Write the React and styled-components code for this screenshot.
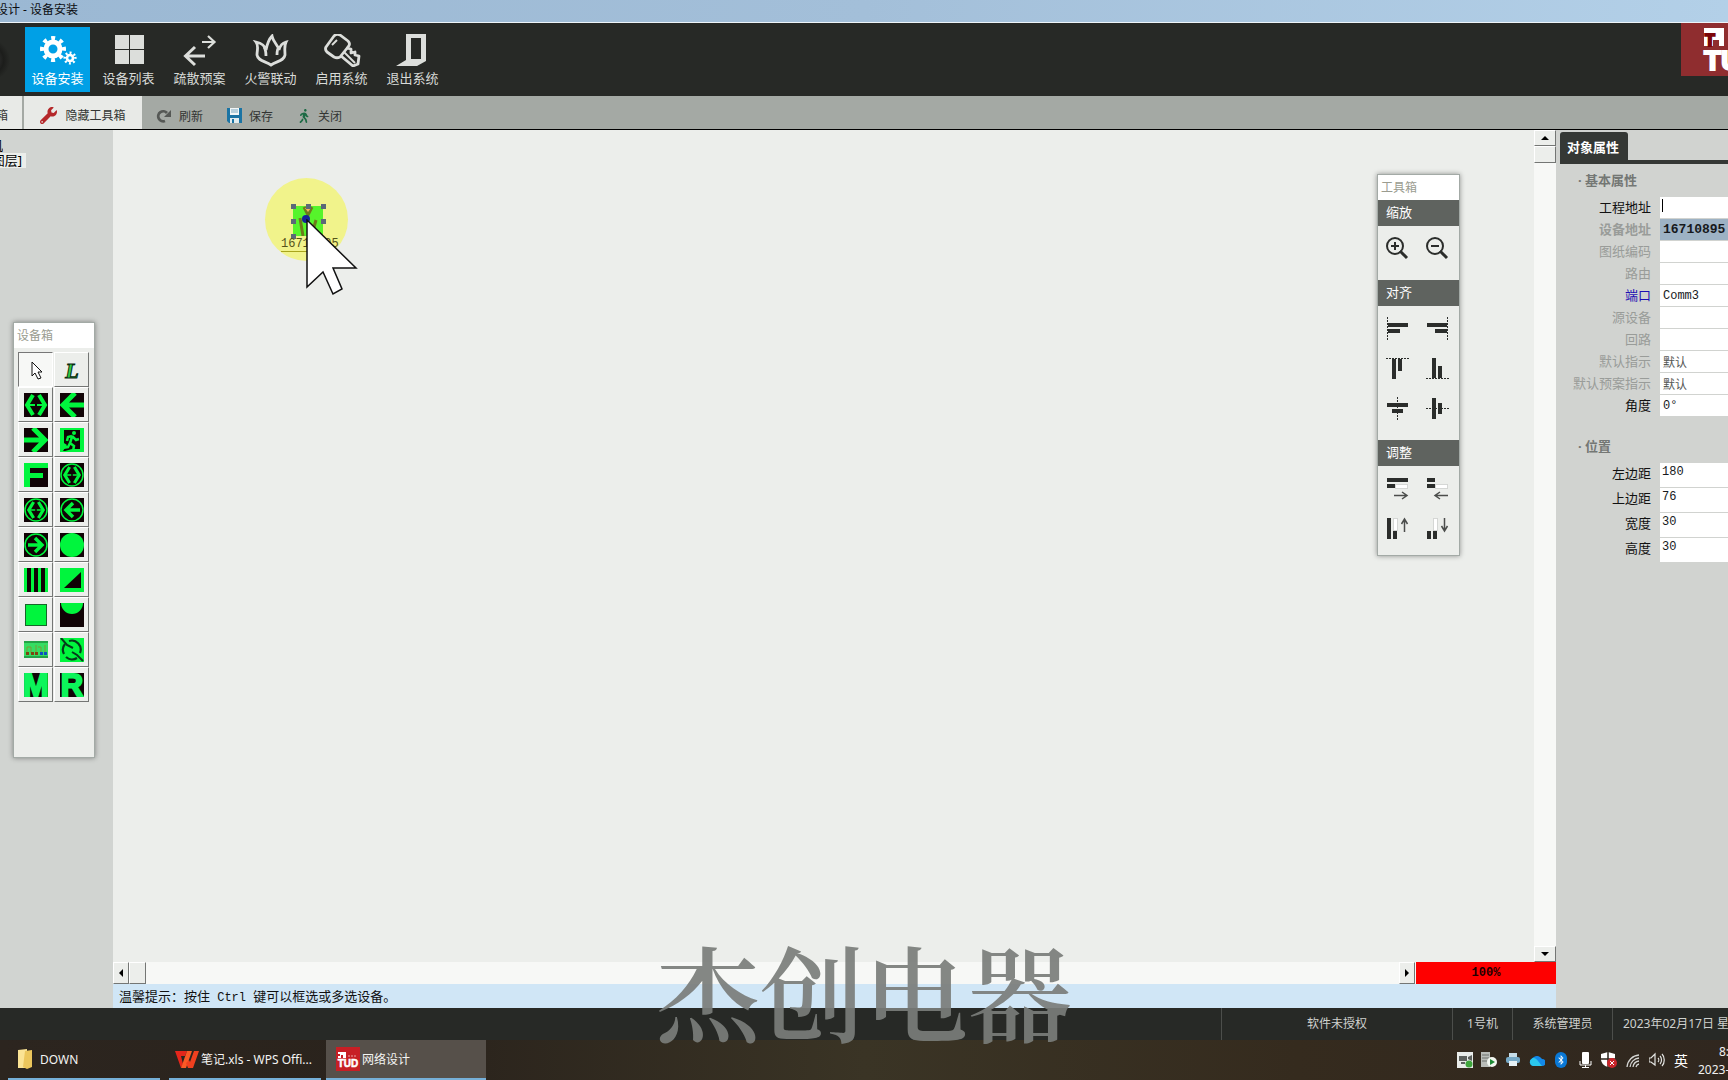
import React from "react"
import styled, { createGlobalStyle } from "styled-components"
import { FaWrench, FaWalking, FaBluetoothB } from "react-icons/fa"

const GlobalStyle = createGlobalStyle`
  * {
    box-sizing: border-box;
  }
  body {
    margin: 0;
    overflow: hidden;
    font-family: "Noto Sans", "Noto Sans CJK SC", sans-serif;
    font-size: 13px;
  }
  button {
    font-family: inherit;
    border: none;
    padding: 0;
    background: none;
    cursor: pointer;
  }
  svg {
    display: block;
    flex-shrink: 0;
  }
`

const GREEN = "#00f53d"
const DARK = "#100305"

/* ---------- icons ---------- */

const Gear = ({ cx, cy, r, w, teeth }) => {
  const ring = r + w / 2
  const dash = (2 * Math.PI * ring) / (teeth * 2)
  return (
    <g fill="none" stroke="#fff">
      <circle cx={cx} cy={cy} r={r - 1} strokeWidth={w} />
      <circle
        cx={cx}
        cy={cy}
        r={ring}
        strokeWidth={w}
        strokeDasharray={`${dash * 0.9} ${dash * 1.1}`}
        transform={`rotate(-11 ${cx} ${cy})`}
      />
    </g>
  )
}

const ribbonIcons = {
  install: (
    <>
      <Gear cx={15} cy={15} r={8} w={5} teeth={8} />
      <Gear cx={32} cy={24} r={4} w={2.6} teeth={8} />
    </>
  ),
  list: (
    <g fill="#dcdedb">
      <rect x="6" y="1" width="14" height="14" />
      <rect x="21" y="1" width="14" height="14" />
      <rect x="6" y="16" width="14" height="14" />
      <rect x="21" y="16" width="14" height="14" />
    </g>
  ),
  plan: (
    <g fill="none" stroke="#dcdedb">
      <path d="M22 8h12M28 2l6.500 6-6.500 6" strokeWidth="2.200" />
      <path d="M6 22h19M15 13L5.500 22l9.500 9" strokeWidth="3" />
    </g>
  ),
  fire: (
    <path
      d="M5 8c3 4 1 8 1 13 1 6 8 6 14 10 6-4 13-4 14-10 0-5-1-9 1-13-4 1-6 4-7 8-1-5-6-8-7-14-4 4-5 9-6 14C14 12 10 9 5 8zM13 13c2 3 2 5 2 9M28 13c-2 2-2 5-2 8"
      fill="none"
      stroke="#dcdedb"
      strokeWidth="2.800"
    />
  ),
  key: (
    <g fill="none" stroke="#dcdedb" strokeWidth="2.800" strokeLinejoin="round">
      <path d="M4 13L12 2c2-2 4-2 6-1l8 6c2 2 2 4 0 6l-8 10c-2 1-4 1-6 0l-7-5c-2-2-2-3-1-5z" />
      <path d="M10 11l5-5" strokeWidth="2" />
      <path d="M19 22l12 10 5-2 1-8-4-1v-3l-4 1v-4l-5-1" />
      <path d="M22 18l11 11" strokeWidth="2" />
    </g>
  ),
  exit: (
    <path
      fillRule="evenodd"
      fill="#dcdedb"
      d="M13 0h20v27l-9 5H3l10-6zM18 4v21h10V4z"
    />
  ),
}

const RefreshIcon = () => (
  <svg width="16" height="14" viewBox="0 0 16 14">
    <path d="M9 12a5 5 0 1 1 2-8" fill="none" stroke="#555855" strokeWidth="2.800" />
    <path d="M15 1v7H8z" fill="#555855" />
  </svg>
)

const SaveIcon = () => (
  <svg width="15" height="15" viewBox="0 0 15 15">
    <path d="M0 0h15v15H2l-2-2z" fill="#1b74a4" />
    <path d="M3 0h9v7H3z" fill="#f2f6f7" />
    <path d="M4 2h7M4 4h7" stroke="#7da9bf" />
    <path d="M3 10h9v5H3z" fill="#e2ecef" />
    <path d="M5 11h2v4H5z" fill="#1b74a4" />
  </svg>
)

const DoubleArrow = ({ s = 1 }) => (
  <g
    transform={`translate(12 12) scale(${s})`}
    fill="none"
    stroke={GREEN}
    strokeWidth="4"
  >
    <path d="M-3-10l-6 10 6 10M3-10l6 10-6 10" />
    <path d="M-7 0h6M1 0h6" strokeWidth="2" />
  </g>
)

const Disc = () => (
  <circle cx="12" cy="12" r="11" fill="none" stroke={GREEN} strokeWidth="1.500" />
)

const deviceIcons = [
  {
    name: "选择",
    bare: true,
    art: (
      <path
        d="M8 4v14l3-3 3 6 3-1-3-6h4z"
        fill="#fff"
        stroke="#111"
        strokeLinejoin="round"
      />
    ),
  },
  {
    name: "线路",
    bare: true,
    art: (
      <text
        x="12"
        y="20"
        textAnchor="middle"
        fontFamily="Liberation Serif, serif"
        fontStyle="italic"
        fontWeight="bold"
        fontSize="22"
        fill="#2fd046"
        stroke="#0b2a10"
        strokeWidth="1"
      >
        L
      </text>
    ),
  },
  { name: "双向", art: <DoubleArrow /> },
  {
    name: "左向",
    art: (
      <path d="M24 12H4M15 0L3 12l12 12" fill="none" stroke={GREEN} strokeWidth="5" />
    ),
  },
  {
    name: "右向",
    art: (
      <path d="M0 12h20M9 0l12 12L9 24" fill="none" stroke={GREEN} strokeWidth="5" />
    ),
  },
  {
    name: "安全出口",
    art: (
      <>
        <path d="M0 0h24v24H0z" fill={GREEN} />
        <path d="M4 2h16v19h-8l-7 2H3l4-6-3-2z" fill={DARK} />
        <circle cx="14" cy="5" r="2" fill={GREEN} />
        <path
          d="M12 8l-4 1-1 4M12 8l4 4 3-1M12 9l-2 6 4 3-1 5M10 15l-2 4-6 1"
          fill="none"
          stroke={GREEN}
          strokeWidth="2.500"
        />
      </>
    ),
  },
  {
    name: "楼层",
    art: (
      <g fill={GREEN}>
        <rect width="24" height="5" />
        <rect width="6" height="24" />
        <rect x="6" y="10" width="13" height="5" />
      </g>
    ),
  },
  {
    name: "双向地埋",
    art: (
      <>
        <Disc />
        <DoubleArrow s={0.8} />
      </>
    ),
  },
  {
    name: "双向吊装",
    art: (
      <>
        <Disc />
        <DoubleArrow s={0.8} />
      </>
    ),
  },
  {
    name: "左向地埋",
    art: (
      <>
        <Disc />
        <path
          d="M20 12H6M13 5l-7 7 7 7"
          fill="none"
          stroke={GREEN}
          strokeWidth="3.500"
        />
      </>
    ),
  },
  {
    name: "右向地埋",
    art: (
      <>
        <Disc />
        <path
          d="M4 12h14M11 5l7 7-7 7"
          fill="none"
          stroke={GREEN}
          strokeWidth="3.500"
        />
      </>
    ),
  },
  { name: "圆灯", art: <circle cx="12" cy="12" r="12" fill={GREEN} /> },
  {
    name: "灯带",
    art: (
      <g fill={GREEN}>
        <rect width="3" height="24" />
        <rect x="7" width="3" height="24" />
        <rect x="14" width="3" height="24" />
        <rect x="21" width="3" height="24" />
      </g>
    ),
  },
  {
    name: "坡道",
    art: (
      <>
        <path d="M0 0h24v24H0z" fill={GREEN} />
        <path d="M21 4v16H4z" fill={DARK} />
      </>
    ),
  },
  {
    name: "方灯",
    bare: true,
    art: (
      <rect x="1.500" y="1.500" width="21" height="21" fill={GREEN} stroke="#17662a" />
    ),
  },
  { name: "半圆灯", art: <path d="M1 0a11 11 0 0 0 22 0z" fill={GREEN} /> },
  {
    name: "配电箱",
    bare: true,
    art: (
      <>
        <path d="M0 3h24v17H0z" fill="#35dd62" />
        <path d="M0 4h24M0 19h24" stroke="#15692d" />
        <path
          d="M3 15V9h4v6M12 15V7M17 15V9h-3M21 15V7"
          stroke="#7d9a35"
          fill="none"
        />
        <g fill="#7c4410">
          <rect x="2" y="14" width="3" height="3" />
          <rect x="7" y="14" width="3" height="3" />
          <rect x="11" y="14" width="3" height="3" />
        </g>
        <path d="M16 14h3v3h-3zM20 14h3v3h-3z" fill="#0d4fc4" />
      </>
    ),
  },
  {
    name: "断路",
    bare: true,
    art: (
      <>
        <path d="M0 0h24v24H0z" fill={GREEN} />
        <path
          d="M4 16A9 9 0 0 1 5 6M9 3A9 9 0 0 1 20 15M17 20A9 9 0 0 1 6 19"
          fill="none"
          stroke="#06391a"
          strokeWidth="2.200"
        />
        <path
          d="M1 0l6 7 6 3M12 14l5 3 6 6"
          fill="none"
          stroke="#06391a"
          strokeWidth="2"
        />
      </>
    ),
  },
  { name: "M型", letter: "M" },
  { name: "R型", letter: "R" },
]

const Letter = ({ children }) => (
  <text
    x="12"
    y="23"
    textAnchor="middle"
    fontFamily="Liberation Sans, sans-serif"
    fontWeight="bold"
    fontSize="31"
    fill="#0cf55a"
    stroke="#0cf55a"
    strokeWidth="2"
  >
    {children}
  </text>
)

const K = "#2b2d2b"
const Lens = ({ plus }) => (
  <g fill="none" stroke={K} strokeWidth="2">
    <circle cx="10" cy="10" r="8" />
    <path d="M6 10h8" />
    {plus && <path d="M10 6v8" />}
    <path d="M15 15l7 7" strokeWidth="3" />
  </g>
)
const Dash = ({ d }) => (
  <path d={d} stroke={K} strokeDasharray="2 1" fill="none" />
)
const Bars = ({ d }) => <path d={d} fill={K} />
const Ghost = (props) => (
  <rect {...props} fill="#fff" stroke="#b5b7b5" strokeDasharray="1 1" />
)
const Thin = ({ d }) => (
  <path d={d} stroke="#4b4d4b" strokeWidth="1.500" fill="none" />
)

const toolGroups = [
  {
    title: "缩放",
    tools: [
      ["放大", <Lens plus />],
      ["缩小", <Lens />],
    ],
  },
  {
    title: "对齐",
    tools: [
      [
        "左对齐",
        <>
          <Dash d="M2.500 1v23" />
          <Bars d="M3 7h20v4H3zM3 13h12v4H3z" />
        </>,
      ],
      [
        "右对齐",
        <>
          <Dash d="M22.500 1v23" />
          <Bars d="M2 7h20v4H2zM10 13h12v4H10z" />
        </>,
      ],
      [
        "顶对齐",
        <>
          <Dash d="M1 2.500h23" />
          <Bars d="M7 3h4v20H7zM13 3h4v12h-4z" />
        </>,
      ],
      [
        "底对齐",
        <>
          <Dash d="M1 22.500h23" />
          <Bars d="M7 2h4v20H7zM13 10h4v12h-4z" />
        </>,
      ],
      [
        "水平居中",
        <>
          <Dash d="M12.500 1v23" />
          <Bars d="M2 7h21v4H2zM7 13h11v4H7z" />
        </>,
      ],
      [
        "垂直居中",
        <>
          <Dash d="M1 12.500h23" />
          <Bars d="M7 2h4v21H7zM13 7h4v11h-4z" />
        </>,
      ],
    ],
  },
  {
    title: "调整",
    tools: [
      [
        "等宽",
        <>
          <Bars d="M2 2h21v4H2zM2 8h8v4H2z" />
          <Ghost x="10.500" y="8.500" width="12" height="4" />
          <Thin d="M9 19.500h13M17 16l5 3.500-5 3.500" />
        </>,
      ],
      [
        "缩窄",
        <>
          <Bars d="M2 2h8v4H2zM2 8h8v4H2z" />
          <Ghost x="10.500" y="8.500" width="12" height="4" />
          <Thin d="M23 19.500H10M15 16l-5 3.500 5 3.500" />
        </>,
      ],
      [
        "等高",
        <>
          <Bars d="M2 2h4v21H2zM8 15h4v8H8z" />
          <Ghost x="8.500" y="2.500" width="4" height="12" />
          <Thin d="M19.500 16V3M16.500 8l3-5 3 5" />
        </>,
      ],
      [
        "缩短",
        <>
          <Bars d="M2 15h4v8H2zM8 15h4v8H8z" />
          <Ghost x="8.500" y="2.500" width="4" height="12" />
          <Thin d="M19.500 2v13M16.500 10l3 5 3-5" />
        </>,
      ],
    ],
  },
]

const trayIcons = [
  [
    "远程",
    <>
      <rect width="16" height="16" fill="#e9ecea" />
      <path d="M2 4h8v5H2zM4 10h4v2H4zM11 5l4-2v6l-4-2z" fill="#5c605d" />
      <circle cx="12" cy="12" r="3.500" fill="#3fa63c" />
    </>,
  ],
  [
    "服务",
    <>
      <path d="M0 0h9v15H0z" fill="#b9bcb8" />
      <path d="M1 3h7M1 6h7M1 9h5" stroke="#6d706c" />
      <circle cx="11" cy="10" r="5" fill="#f2f7f1" />
      <path d="M9 7l5 3-5 3z" fill="#1d8a35" />
    </>,
  ],
  [
    "打印机",
    <>
      <path d="M4 1h8v5H4z" fill="#c6dde9" />
      <rect x="1" y="5" width="14" height="6" rx="2" fill="#76a9c7" />
      <path d="M4 9h8v5H4z" fill="#e6f1f6" />
    </>,
  ],
  [
    "云盘",
    <>
      <path
        d="M4 14a4 4 0 0 1-1-7.500A6 6 0 0 1 13 7a3.500 3.500 0 0 1 0 7z"
        fill="#1389ea"
      />
      <path d="M4 14a4 4 0 0 1-1-7.500c4-2 6 3 10 7.500z" fill="#2bc8ee" />
    </>,
  ],
  [
    "蓝牙",
    <>
      <rect x="2" width="12" height="16" rx="6" fill="#0a78d6" />
      <FaBluetoothB x="3" y="3" size={10} color="#fff" />
    </>,
  ],
  [
    "麦克风",
    <>
      <rect x="5" width="7" height="12" rx="1" fill="#fff" />
      <path d="M3 9v4h11V9M8.500 13v3M5 15.500h7" stroke="#fff" fill="none" />
    </>,
  ],
  [
    "安全中心",
    <>
      <path d="M7 0l7 2v5c0 4-3 7-7 8-4-1-7-4-7-8V2z" fill="#fff" />
      <path d="M7 0v15M0 7h14" stroke="#2d261e" strokeWidth="1.500" />
      <circle cx="11" cy="11" r="5" fill="#c9252b" />
      <path d="M9 9l4 4M13 9l-4 4" stroke="#fff" />
    </>,
  ],
  [
    "无线网络",
    <g fill="none" stroke="#d5d6d4" strokeWidth="1.300">
      <path d="M2 15A13 13 0 0 1 14 3M5 15a10 10 0 0 1 9-9M8 15a7 7 0 0 1 6-6M11 15a4 4 0 0 1 3-3" />
    </g>,
  ],
  [
    "音量",
    <g fill="none" stroke="#e4e5e3" strokeWidth="1.200">
      <path d="M0 6h2l4-4v11L2 10H0zM9 6c1 1 1 3 0 4M11 4c2 2 2 6 0 8M13 2c3 3 3 9 0 12" />
    </g>,
  ],
]

/* ---------- data ---------- */

const ribbon = [
  ["install", "设备安装"],
  ["list", "设备列表"],
  ["plan", "疏散预案"],
  ["fire", "火警联动"],
  ["key", "启用系统"],
  ["exit", "退出系统"],
]

const baseProps = [
  { id: "addr", label: "工程地址", value: "", tone: "#111" },
  { id: "device", label: "设备地址", value: "16710895", selected: true, bold: true },
  { id: "drawing", label: "图纸编码", value: "" },
  { id: "route", label: "路由", value: "" },
  { id: "port", label: "端口", value: "Comm3", tone: "#1d10b4" },
  { id: "source", label: "源设备", value: "" },
  { id: "loop", label: "回路", value: "" },
  { id: "defSign", label: "默认指示", value: "默认", muted: true },
  { id: "defPlan", label: "默认预案指示", value: "默认", muted: true },
  { id: "angle", label: "角度", value: "0°", tone: "#111" },
]

const placeProps = [
  { id: "left", label: "左边距", value: "180" },
  { id: "top", label: "上边距", value: "76" },
  { id: "width", label: "宽度", value: "30" },
  { id: "height", label: "高度", value: "30" },
]

const handles = [
  [0, 0],
  [50, 0],
  [100, 0],
  [0, 50],
  [100, 50],
  [0, 100],
]

/* ---------- app ---------- */

const App = () => {
  return (
    <Page>
      <GlobalStyle />
      <TitleBar>
        <span>设计 - 设备安装</span>
      </TitleBar>
      <Ribbon>
        <Orb />
        {ribbon.map(([icon, label], i) => (
          <RibbonButton key={icon} $active={i === 0}>
            <svg width="40" height="33" viewBox="0 0 40 33">
              {ribbonIcons[icon]}
            </svg>
            {label}
          </RibbonButton>
        ))}
        <Brand width="47" height="53" viewBox="0 0 47 53">
          <rect width="47" height="53" fill="#8f2d2f" />
          <rect x="23" y="5" width="20" height="18" fill="#fff" />
          <rect x="32" y="17" width="6" height="6" fill="#8f2d2f" />
          <text
            x="24"
            y="23"
            fontSize="16"
            fontWeight="bold"
            fill="#7c0508"
            stroke="#7c0508"
            strokeWidth="2"
          >
            T
          </text>
          <text
            x="23"
            y="47"
            fontSize="28"
            fontWeight="bold"
            fill="#fff"
            stroke="#fff"
            strokeWidth="2"
          >
            TU
          </text>
        </Brand>
      </Ribbon>
      <SubBar>
        <SubTab $cut>箱</SubTab>
        <SubTab>
          <FaWrench size={17} color="#b5282a" />
          隐藏工具箱
        </SubTab>
        <SubActions>
          <SubButton>
            <RefreshIcon />
            刷新
          </SubButton>
          <SubButton>
            <SaveIcon />
            保存
          </SubButton>
          <SubButton>
            <FaWalking size={14} color="#1d6b45" />
            关闭
          </SubButton>
        </SubActions>
      </SubBar>

      <Body>
        <TreePanel>
          <TreeNode $cut>机</TreeNode>
          <TreeNode $selected>图层]</TreeNode>
          <DeviceBox>
            <BoxTitle>设备箱</BoxTitle>
            <DeviceGrid>
              {deviceIcons.map(({ name, art, bare, letter }, i) => (
                <DeviceButton key={name} aria-label={name} $pressed={i === 0}>
                  <svg width="24" height="24" viewBox="0 0 24 24">
                    {!bare && <rect width="24" height="24" fill={DARK} />}
                    {letter ? <Letter>{letter}</Letter> : art}
                  </svg>
                </DeviceButton>
              ))}
            </DeviceGrid>
          </DeviceBox>
        </TreePanel>

        <Work>
          <CanvasRow>
            <Canvas>
              <Halo />
              <Device>
                <svg width="30" height="30" viewBox="0 0 30 30">
                  <path d="M0 0h30v30H0z" fill="#56f42b" />
                  <path
                    d="M11 1l4 8 4-8M7 12l3 18M23 14l-4 14"
                    stroke="#6d7a1c"
                    strokeWidth="3"
                    fill="none"
                  />
                  <path d="M12 2h6l-3 4z" fill="#f5b55c" />
                  <circle cx="13" cy="13" r="4" fill="#15239a" />
                </svg>
                {handles.map(([x, y]) => (
                  <Handle key={`${x}-${y}`} style={{ left: `${x}%`, top: `${y}%` }} />
                ))}
              </Device>
              <DeviceLabel>16710895</DeviceLabel>
              <Cursor width="52" height="77" viewBox="0 0 52 77">
                <path
                  d="M1 1L50 49H27L36 70L27 75L17 53L1 68z"
                  fill="#fff"
                  stroke="#111"
                  strokeWidth="1.500"
                />
              </Cursor>

              <ToolBox>
                <BoxTitle>工具箱</BoxTitle>
                {toolGroups.map(({ title, tools }) => (
                  <React.Fragment key={title}>
                    <ToolHeading>{title}</ToolHeading>
                    <ToolGrid>
                      {tools.map(([name, art]) => (
                        <ToolButton key={name} aria-label={name}>
                          <svg width="24" height="24" viewBox="0 0 24 24">
                            {art}
                          </svg>
                        </ToolButton>
                      ))}
                    </ToolGrid>
                  </React.Fragment>
                ))}
              </ToolBox>
            </Canvas>
            <VTrack>
              <ScrollButton aria-label="向上">
                <Arrow $turn={0} />
              </ScrollButton>
              <ScrollThumb />
              <Spacer />
              <ScrollButton aria-label="向下">
                <Arrow $turn={180} />
              </ScrollButton>
            </VTrack>
          </CanvasRow>
          <HTrack>
            <ScrollButton aria-label="向左">
              <Arrow $turn={270} />
            </ScrollButton>
            <ScrollThumb />
            <Spacer />
            <ScrollButton aria-label="向右">
              <Arrow $turn={90} />
            </ScrollButton>
            <Zoom>100%</Zoom>
          </HTrack>
          <Hint>
            温馨提示：按住<kbd> Ctrl </kbd>键可以框选或多选设备。
          </Hint>
        </Work>

        <PropPanel>
          <TabStrip>
            <PropTab>对象属性</PropTab>
          </TabStrip>
          <GroupTitle>· 基本属性</GroupTitle>
          <BaseRows>
            {baseProps.map(({ id, label, value, tone, selected, bold, muted }) => (
              <PropRow key={id}>
                <PropLabel htmlFor={id} $tone={tone} $bold={bold}>
                  {label}
                </PropLabel>
                <PropInput
                  id={id}
                  defaultValue={value}
                  $selected={selected}
                  $muted={muted}
                />
                {id === "addr" && <Caret />}
              </PropRow>
            ))}
          </BaseRows>
          <GroupTitle>· 位置</GroupTitle>
          {placeProps.map(({ id, label, value }) => (
            <PropRow key={id} $tall>
              <PropLabel htmlFor={id} $tone="#111">
                {label}
              </PropLabel>
              <PropInput id={id} defaultValue={value} $tall />
            </PropRow>
          ))}
        </PropPanel>
      </Body>

      <StatusBar>
        <StatusCell $w={231}>软件未授权</StatusCell>
        <StatusCell $w={60}>1号机</StatusCell>
        <StatusCell $w={100}>系统管理员</StatusCell>
        <StatusCell $w={116} $start>
          2023年02月17日 星期
        </StatusCell>
      </StatusBar>

      <TaskBar>
        <TaskButton $w={152}>
          <TaskIcon width="24" height="24" viewBox="0 0 24 24">
            <path d="M4 3l9-1v19H4z" fill="#fbe394" />
            <path d="M11 4l7-1v17l-5 2-4-2z" fill="#ecc65c" />
          </TaskIcon>
          DOWN
        </TaskButton>
        <TaskButton $w={152}>
          <TaskIcon width="24" height="24" viewBox="0 0 24 24">
            <path d="M0 4h12l-2 5H6l2 8-2 4z" fill="#e5261b" />
            <path d="M12 4l-6 17h5l6-17z" fill="#fb5a26" />
            <path d="M24 4l-6 17h-5l-2-5 3-3 1 2 4-11z" fill="#f0401f" />
          </TaskIcon>
          笔记.xls - WPS Offi...
        </TaskButton>
        <TaskButton $w={160} $active>
          <TaskIcon width="24" height="24" viewBox="0 0 24 24">
            <rect width="24" height="24" fill="#c71f25" />
            <path d="M2 5h8v6H7V8H5v3H2V9h2V7H2z" fill="#fff" />
            <path d="M12 9h9" stroke="#e9a5a7" strokeDasharray="2 1" />
            <text
              x="12"
              y="20"
              textAnchor="middle"
              fontSize="10"
              fontWeight="bold"
              fill="#fff"
              stroke="#fff"
              strokeWidth="0.500"
            >
              TUD
            </text>
          </TaskIcon>
          网络设计
        </TaskButton>
        <Tray>
          {trayIcons.map(([name, art]) => (
            <TrayButton key={name} aria-label={name}>
              <svg width="16" height="16" viewBox="0 0 16 16">
                {art}
              </svg>
            </TrayButton>
          ))}
          <TrayButton>英</TrayButton>
          <Clock>
            <span>8:</span>
            <span>2023-</span>
          </Clock>
        </Tray>
      </TaskBar>
      <Watermark>杰创电器</Watermark>
    </Page>
  )
}

const Page = styled.div`
  height: 100vh;
  display: flex;
  flex-direction: column;
  position: relative;
  overflow: hidden;
  background: #d1d4d1;
`

const TitleBar = styled.header`
  height: 23px;
  display: flex;
  align-items: center;
  flex-shrink: 0;
  border-bottom: 1px solid #eef4f8;
  background: linear-gradient(90deg, #9bb8d3, #a3bfd9 50%, #b3d0e8);
  color: #0c0e12;
  font-size: 12px;
  line-height: 20px;
  padding-bottom: 2px;
  span {
    width: 78px;
    display: flex;
    justify-content: flex-end;
    white-space: nowrap;
  }
`

const Ribbon = styled.nav`
  height: 73px;
  flex-shrink: 0;
  display: flex;
  align-items: center;
  gap: 6px;
  background: #272926;
`

const Orb = styled.div`
  width: 19px;
  height: 60px;
  background: radial-gradient(ellipse at -60% 50%, #444 0, #1c1d1b 35%, #272926 50%);
`

const RibbonButton = styled.button`
  width: 65px;
  height: 65px;
  display: flex;
  flex-direction: column;
  align-items: center;
  gap: 2px;
  padding-top: 7px;
  font-size: 13px;
  line-height: 18px;
  color: ${({ $active }) => ($active ? "#fff" : "#d8dad7")};
  background: ${({ $active }) => ($active ? "#00a0e6" : "transparent")};
`

const Brand = styled.svg`
  margin-left: auto;
  align-self: flex-start;
  font-family: "Liberation Sans", sans-serif;
`

const SubBar = styled.div`
  height: 34px;
  flex-shrink: 0;
  display: flex;
  gap: 2px;
  border-bottom: 1px solid #000;
  background: #a4a9a4;
`

const SubTab = styled.button`
  width: ${({ $cut }) => ($cut ? "22px" : "118px")};
  display: flex;
  align-items: center;
  justify-content: ${({ $cut }) => ($cut ? "flex-end" : "center")};
  gap: 8px;
  padding: 5px ${({ $cut }) => ($cut ? "14px" : "0")} 0 0;
  overflow: hidden;
  font-size: 12px;
  color: #333533;
  background: #e8eae7;
`

const SubActions = styled.div`
  display: flex;
  gap: 24px;
  padding: 6px 0 0 12px;
`

const SubButton = styled.button`
  display: flex;
  align-items: center;
  gap: 7px;
  font-size: 12px;
  color: #333533;
`

const Body = styled.main`
  flex: 1;
  min-height: 0;
  display: flex;
`

const TreePanel = styled.aside`
  width: 113px;
  flex-shrink: 0;
  position: relative;
  padding-top: 8px;
`

const TreeNode = styled.div`
  width: ${({ $cut }) => ($cut ? "3px" : "26px")};
  height: 15px;
  display: flex;
  justify-content: flex-end;
  padding-right: ${({ $selected }) => ($selected ? "4px" : "0")};
  overflow: hidden;
  white-space: nowrap;
  line-height: 15px;
  background: ${({ $selected }) => ($selected ? "#eceeeb" : "transparent")};
`

const FloatBox = styled.section`
  position: absolute;
  border: 1px solid #a3aaa6;
  background: #eceeeb;
  box-shadow: 0 0 5px rgba(0, 0, 0, 0.4);
`

const DeviceBox = styled(FloatBox)`
  left: 13px;
  top: 192px;
  width: 82px;
  padding-bottom: 51px;
`

const BoxTitle = styled.h2`
  height: 25px;
  margin: 0;
  padding-left: 3px;
  font-size: 12px;
  font-weight: 400;
  line-height: 25px;
  color: #9a9c90;
  background: #fff;
`

const DeviceGrid = styled.div`
  display: grid;
  grid-template-columns: 35px 35px;
  column-gap: 1px;
  padding: 4px;
`

const DeviceButton = styled.button`
  height: 35px;
  display: flex;
  align-items: center;
  justify-content: center;
  border: 1px solid;
  border-color: ${({ $pressed }) =>
    $pressed ? "#777 #fff #fff #777" : "#fff #747674 #747674 #fff"};
  background: ${({ $pressed }) => ($pressed ? "#f7f8f6" : "#eceeeb")};
`

const Work = styled.div`
  flex: 1;
  min-width: 0;
  display: flex;
  flex-direction: column;
`

const CanvasRow = styled.div`
  flex: 1;
  min-height: 0;
  display: flex;
`

const Canvas = styled.div`
  flex: 1;
  position: relative;
  background: #eceeeb;
`

const Halo = styled.div`
  position: absolute;
  left: 152px;
  top: 48px;
  width: 83px;
  height: 83px;
  border-radius: 50%;
  background: #f1f38b;
`

const Device = styled.div`
  position: absolute;
  left: 180px;
  top: 76px;
  width: 30px;
  height: 30px;
`

const Handle = styled.i`
  position: absolute;
  width: 5px;
  height: 5px;
  margin: -2px;
  background: #5b6878;
`

const DeviceLabel = styled.span`
  position: absolute;
  left: 168px;
  top: 107px;
  border-bottom: 1px solid #a9a51c;
  font-family: "Liberation Mono", monospace;
  font-size: 12px;
  line-height: 14px;
  color: #55531a;
`

const Cursor = styled.svg`
  position: absolute;
  left: 193px;
  top: 89px;
`

const ToolBox = styled(FloatBox)`
  right: 74px;
  top: 44px;
  width: 83px;
`

const ToolHeading = styled.h3`
  height: 26px;
  margin: 0;
  padding-left: 8px;
  font-size: 13px;
  font-weight: 400;
  line-height: 25px;
  color: #fff;
  background: #5f635f;
`

const ToolGrid = styled.div`
  display: grid;
  grid-template-columns: 38px 42px;
  grid-auto-rows: 40px;
  padding: 2px 0 12px;
  &:last-child {
    padding-bottom: 7px;
  }
`

const ToolButton = styled.button`
  display: flex;
  align-items: center;
  justify-content: center;
`

const VTrack = styled.div`
  width: 22px;
  display: flex;
  flex-direction: column;
  background: #f7f8f6;
  button {
    height: 16px;
  }
`

const HTrack = styled.div`
  height: 22px;
  flex-shrink: 0;
  display: flex;
  background: #f7f8f6;
  button {
    width: 16px;
  }
`

const ScrollButton = styled.button`
  display: flex;
  align-items: center;
  justify-content: center;
  border: 1px solid;
  border-color: #fff #747674 #747674 #fff;
  background: #eceeeb;
`

const ScrollThumb = styled.div`
  min-width: 17px;
  min-height: 17px;
  border: 1px solid;
  border-color: #fff #747674 #747674 #fff;
  background: #eceeeb;
`

const Arrow = styled.span`
  border: 4px solid transparent;
  border-top: none;
  border-bottom-color: #000;
  transform: rotate(${({ $turn }) => $turn}deg);
`

const Spacer = styled.div`
  flex: 1;
`

const Zoom = styled.output`
  width: 140px;
  margin-left: 1px;
  background: #fe0000;
  color: #200000;
  font-family: "Liberation Mono", monospace;
  font-size: 12px;
  font-weight: 700;
  line-height: 22px;
  text-align: center;
`

const Hint = styled.p`
  height: 24px;
  flex-shrink: 0;
  margin: 0;
  padding-left: 6px;
  line-height: 24px;
  color: #111;
  background: #d0e6f6;
  kbd {
    font-family: "Liberation Mono", monospace;
    font-size: 12px;
    white-space: pre;
  }
`

const PropPanel = styled.aside`
  width: 172px;
  flex-shrink: 0;
  overflow: hidden;
  background: #d1d3d0;
`

const TabStrip = styled.div`
  margin: 2px 0 0 4px;
  border-bottom: 4px solid #353835;
`

const PropTab = styled.button`
  width: 68px;
  height: 28px;
  padding-right: 2px;
  border-radius: 3px 3px 0 0;
  font-size: 13px;
  font-weight: 700;
  color: #fff;
  background: #353835;
`

const GroupTitle = styled.h3`
  height: 33px;
  margin: 0;
  padding-left: 22px;
  font-size: 13px;
  font-weight: 700;
  line-height: 33px;
  color: #747774;
`

const BaseRows = styled.div`
  margin-bottom: 13px;
`

const PropRow = styled.div`
  height: ${({ $tall }) => ($tall ? "25px" : "22px")};
  display: flex;
  gap: 9px;
  position: relative;
`

const PropLabel = styled.label`
  width: 95px;
  flex-shrink: 0;
  text-align: right;
  white-space: nowrap;
  line-height: 20px;
  font-weight: ${({ $bold }) => ($bold ? 700 : 400)};
  color: ${({ $tone }) => $tone || "#999c99"};
`

const PropInput = styled.input`
  flex: 1;
  min-width: 0;
  height: ${({ $tall }) => ($tall ? "24px" : "21px")};
  border: none;
  border-radius: 0;
  outline: none;
  padding: ${({ $tall }) => ($tall ? "0 0 6px 2px" : "0 0 0 3px")};
  font-family: "Liberation Mono", "Noto Sans CJK SC", monospace;
  font-size: ${({ $selected }) => ($selected ? "13px" : "12px")};
  font-weight: ${({ $selected }) => ($selected ? 700 : 400)};
  color: ${({ $muted }) => ($muted ? "#555855" : "#16191c")};
  background: ${({ $selected }) => ($selected ? "#9db2c4" : "#fff")};
`

const Caret = styled.i`
  position: absolute;
  left: 106px;
  top: 2px;
  width: 1px;
  height: 13px;
  background: #000;
`

const StatusBar = styled.footer`
  height: 32px;
  flex-shrink: 0;
  display: flex;
  justify-content: flex-end;
  background: #272926;
`

const StatusCell = styled.div`
  width: ${({ $w }) => $w}px;
  padding-left: ${({ $start }) => ($start ? "10px" : "0")};
  border-left: 1px solid #4c4e4b;
  overflow: hidden;
  white-space: nowrap;
  font-size: 12px;
  line-height: 32px;
  text-align: ${({ $start }) => ($start ? "left" : "center")};
  color: #cfd1ce;
`

const TaskBar = styled.div`
  height: 40px;
  flex-shrink: 0;
  display: flex;
  gap: 9px;
  padding-left: 8px;
  background: linear-gradient(90deg, #2c251f, #2a231c 25%, #3a3425 50%, #352b1e 75%, #30271f);
`

const TaskButton = styled.button`
  width: ${({ $w }) => $w}px;
  margin-left: ${({ $active }) => ($active ? "-4px" : "0")};
  display: flex;
  align-items: center;
  gap: 2px;
  padding-left: ${({ $active }) => ($active ? "10px" : "6px")};
  border-bottom: 2px solid #76b0d8;
  font-size: 12px;
  white-space: nowrap;
  color: #f4f4f3;
  background: ${({ $active }) => ($active ? "#56504a" : "transparent")};
`

const TaskIcon = styled.svg`
  font-family: "Liberation Sans", sans-serif;
`

const Tray = styled.div`
  width: 275px;
  margin-left: auto;
  display: flex;
  align-items: center;
  overflow: hidden;
`

const TrayButton = styled.button`
  width: 24px;
  height: 40px;
  flex-shrink: 0;
  display: flex;
  align-items: center;
  justify-content: center;
  font-size: 14px;
  color: #fff;
`

const Clock = styled.time`
  width: 40px;
  flex-shrink: 0;
  display: flex;
  flex-direction: column;
  padding: 2px 0 0 5px;
  white-space: nowrap;
  font-size: 12px;
  line-height: 18px;
  color: #f0f0ef;
  span:first-child {
    padding-left: 21px;
  }
`

const Watermark = styled.div`
  position: absolute;
  left: 50%;
  bottom: 38px;
  transform: translateX(-50%);
  pointer-events: none;
  white-space: nowrap;
  font-family: "Noto Serif CJK SC", "Noto Sans CJK SC", serif;
  font-size: 104px;
  font-weight: 600;
  line-height: 104px;
  color: rgba(122, 125, 121, 0.92);
`

export default App
